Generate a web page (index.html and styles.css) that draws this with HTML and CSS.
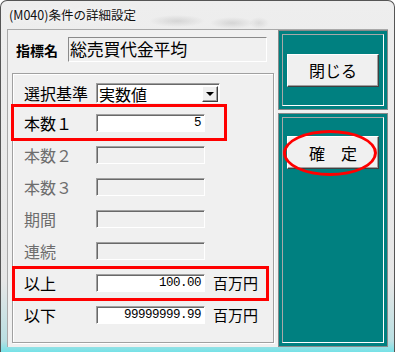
FILE: index.html
```html
<!DOCTYPE html>
<html lang="ja">
<head>
    <meta charset="UTF-8">
    <title>(M040)条件の詳細設定</title>
    <link rel="stylesheet" href="styles.css">
</head>
<body>
    <div class="window">
        <div class="titlebar"><span class="title">(M040)条件の詳細設定</span></div>
        <div class="client">
            <div class="main">
                <div class="name-row">
                    <span class="name-label">指標名</span>
                    <div class="name-box">総売買代金平均</div>
                </div>
                <div class="group">
                    <div class="row row-combo">
                        <span class="label">選択基準</span>
                        <div class="combo">
                            <span class="combo-text">実数値</span>
                            <span class="drop"><span class="arrow"></span></span>
                        </div>
                    </div>
                    <div class="rows">
                        <div class="row mark-a">
                            <span class="label">本数１</span>
                            <div class="field">5</div>
                        </div>
                        <div class="row">
                            <span class="label disabled">本数２</span>
                            <div class="field off"></div>
                        </div>
                        <div class="row">
                            <span class="label disabled">本数３</span>
                            <div class="field off"></div>
                        </div>
                        <div class="row">
                            <span class="label disabled">期間</span>
                            <div class="field off"></div>
                        </div>
                        <div class="row">
                            <span class="label disabled">連続</span>
                            <div class="field off"></div>
                        </div>
                        <div class="row mark-b">
                            <span class="label">以上</span>
                            <div class="field">100.00</div>
                            <span class="unit">百万円</span>
                        </div>
                        <div class="row">
                            <span class="label">以下</span>
                            <div class="field">99999999.99</div>
                            <span class="unit">百万円</span>
                        </div>
                    </div>
                </div>
            </div>
            <div class="side">
                <div class="panel panel-top">
                    <div class="panel-inner">
                        <button class="btn">閉じる</button>
                    </div>
                </div>
                <div class="panel panel-bottom">
                    <div class="panel-inner">
                        <button class="btn btn-ok">確　定</button>
                    </div>
                </div>
            </div>
        </div>
    </div>
</body>
</html>
```

FILE: styles.css
```css
body {
    margin: 0;
    background: #fff;
    font-family: "Noto Sans CJK JP", sans-serif;
    overflow: hidden;
}
.window {
    width: 395px;
    height: 352px;
    box-sizing: border-box;
    border: 1px solid #555;
    border-bottom: none;
    border-radius: 7px 7px 0 0;
    padding: 0 6px;
    overflow: hidden;
    background: linear-gradient(to bottom, #eeeeee 0, #e6e6e6 280px, #b9dfe2 340px, #6fe2e8 352px);
}
.titlebar {
    height: 28px;
    display: flex;
    align-items: center;
    padding-left: 2px;
    background:
        radial-gradient(ellipse 28px 6px at 170px 20px, rgba(0, 0, 0, 0.10), transparent),
        radial-gradient(ellipse 22px 6px at 225px 22px, rgba(0, 0, 0, 0.10), transparent),
        radial-gradient(ellipse 10px 6px at 252px 22px, rgba(0, 0, 0, 0.08), transparent);
}
.title {
    font-size: 12.5px;
    line-height: 14px;
    color: #111;
    text-shadow: 0 0 6px #fff;
}
.client {
    display: flex;
    height: 318px;
    box-sizing: border-box;
    background: #f0f0f0;
    border-top: 1px solid #a9a9a9;
    border-left: 1px solid #a9a9a9;
}
.main {
    width: 270px;
}
.name-row {
    display: flex;
    align-items: center;
    padding: 7px 0 0 8px;
}
.name-label {
    font-size: 14px;
    font-weight: bold;
    line-height: 16px;
    width: 42px;
    margin-right: 10px;
}
.name-box {
    width: 199px;
    height: 25px;
    box-sizing: border-box;
    border: 1px solid;
    border-color: #8a8a8a #fff #fff #8a8a8a;
    font-size: 17px;
    line-height: 22px;
    padding-left: 1px;
    letter-spacing: -0.3px;
}
.group {
    margin: 11px 0 0 4px;
    width: 262px;
    height: 270px;
    box-sizing: border-box;
    border: 1px solid #a0a0a0;
    box-shadow: inset 1px 1px 0 #fff, 1px 1px 0 #fff;
    padding: 9px 0 0 11px;
}
.row {
    display: flex;
    align-items: center;
    position: relative;
    height: 18px;
}
.row-combo {
    height: 20px;
}
.rows {
    margin-top: 11px;
    display: flex;
    flex-direction: column;
    gap: 14px;
}
.label {
    width: 72px;
    font-size: 16px;
    line-height: 18px;
    color: #000;
}
.label.disabled {
    color: #6d6d6d;
}
.combo {
    width: 124px;
    height: 20px;
    box-sizing: border-box;
    display: flex;
    align-items: center;
    justify-content: space-between;
    background: #fff;
    border: 1px solid;
    border-color: #a0a0a0 #fff #fff #a0a0a0;
    box-shadow: inset 1px 1px 0 #696969;
    padding: 1px 1px 0 2px;
}
.combo-text {
    font-size: 16px;
    line-height: 18px;
}
.drop {
    width: 16px;
    height: 16px;
    box-sizing: border-box;
    display: flex;
    align-items: center;
    justify-content: center;
    background: #f0f0f0;
    border: 1px solid;
    border-color: #fff #404040 #404040 #fff;
    box-shadow: inset -1px -1px 0 #a0a0a0;
}
.arrow {
    width: 0;
    height: 0;
    border-left: 4px solid transparent;
    border-right: 4px solid transparent;
    border-top: 4px solid #000;
}
.field {
    width: 109px;
    height: 18px;
    box-sizing: border-box;
    background: #fff;
    border: 1px solid;
    border-color: #a0a0a0 #fff #fff #a0a0a0;
    box-shadow: inset 1px 1px 0 #696969;
    font-family: "Liberation Mono", monospace;
    font-size: 12.5px;
    line-height: 16px;
    letter-spacing: -0.5px;
    text-align: right;
    padding-right: 3px;
}
.field.off {
    background: #f0f0f0;
}
.unit {
    margin-left: 8px;
    font-size: 15px;
    line-height: 18px;
}
.mark-a::after,
.mark-b::after {
    content: "";
    position: absolute;
    box-sizing: border-box;
    border: 3px solid #f00;
}
.mark-a::after {
    left: -13px;
    top: -10px;
    width: 216px;
    height: 37px;
}
.mark-b::after {
    left: -12px;
    top: -8px;
    width: 257px;
    height: 35px;
}
.side {
    width: 110px;
    display: flex;
    flex-direction: column;
    gap: 3px;
}
.panel {
    box-sizing: border-box;
    border: 1px solid #8a8a8a;
    padding: 3px;
    background: #008080;
}
.panel-top {
    height: 80px;
}
.panel-bottom {
    flex: 1;
}
.panel-inner {
    height: 100%;
    box-sizing: border-box;
    border: 1px solid;
    border-color: #a8a8a8 #fff #fff #a8a8a8;
    display: flex;
    justify-content: center;
    align-items: center;
}
.panel-bottom .panel-inner {
    align-items: flex-start;
    padding-top: 18px;
}
.btn {
    width: 92px;
    height: 33px;
    box-sizing: border-box;
    background: #f0f0f0;
    border: 1px solid;
    border-color: #fff #404040 #404040 #fff;
    box-shadow: inset -1px -1px 0 #a0a0a0;
    font-family: "Noto Sans CJK JP", sans-serif;
    font-size: 16px;
    line-height: 18px;
    color: #000;
    padding: 0;
    position: relative;
}
.btn-ok::after {
    content: "";
    position: absolute;
    left: -5px;
    top: -7px;
    width: 94px;
    height: 46px;
    box-sizing: border-box;
    border: 3px solid #f00;
    border-radius: 50%;
}
```
